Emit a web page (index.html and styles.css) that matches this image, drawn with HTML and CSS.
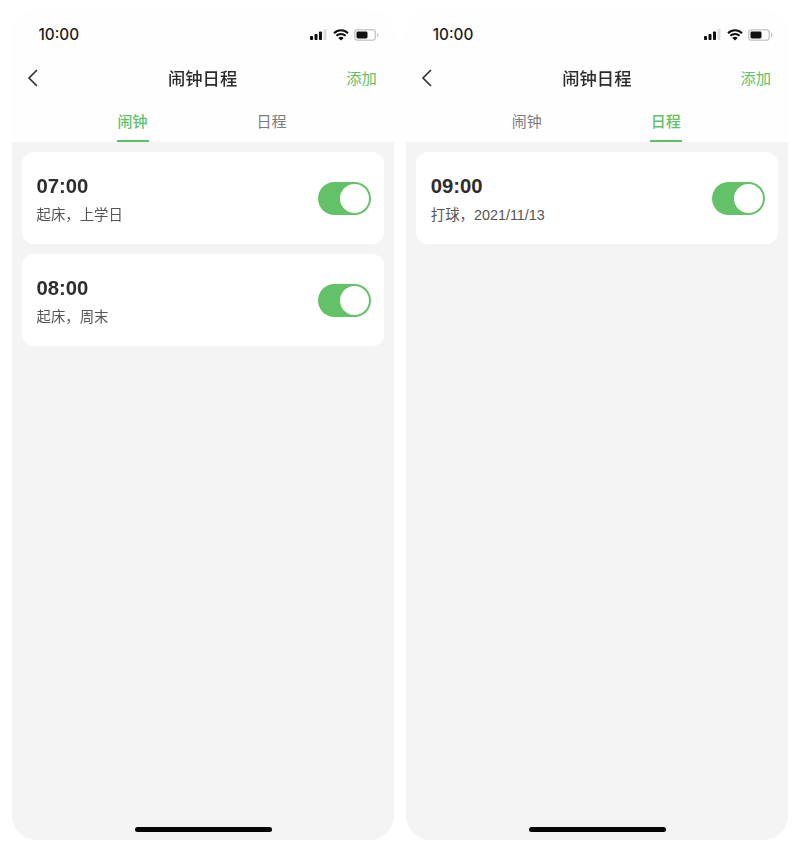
FILE: index.html
```html
<!DOCTYPE html>
<html lang="zh-CN">
<head>
<meta charset="utf-8">
<title>闹钟日程</title>
<link rel="stylesheet" href="styles.css">
</head>
<body>
<main class="screens">
  <section class="phone">
    <div class="top">
      <div class="status">
        <span class="clock">10:00</span>
        <div class="status-icons">
          <svg class="i-signal" viewBox="0 0 18 11"><rect x="0" y="7" width="3" height="4" rx=".8" fill="#111"/><rect x="4.5" y="5" width="3" height="6" rx=".8" fill="#111"/><rect x="9" y="2.5" width="3" height="8.5" rx=".8" fill="#111"/><rect x="13.5" y="0" width="3" height="11" rx=".8" fill="#ddd"/></svg>
          <svg class="i-wifi" viewBox="0 0 16 12"><path d="M1 4.2a10 10 0 0 1 14 0M3.4 6.8a6.6 6.6 0 0 1 9.2 0" fill="none" stroke="#111" stroke-width="2"/><path d="M8 11.6 5.3 9a3.800 3.800 0 0 1 5.400 0z" fill="#111"/></svg>
          <svg class="i-batt" viewBox="0 0 25 12"><rect x=".8" y=".8" width="20.500" height="10.400" rx="3" fill="#fff" stroke="#ccc" stroke-width="1.500"/><rect x="2.500" y="2.500" width="11" height="7" rx="1.400" fill="#111"/><path d="M23 4v4a2 2 0 0 0 1.400-2 2 2 0 0 0-1.400-2z" fill="#bbb"/></svg>
        </div>
      </div>
      <header class="nav">
        <svg class="i-back" viewBox="0 0 11 18"><path d="M9.500 1.500 2 9l7.500 7.500" fill="none" stroke="#333" stroke-width="1.700" stroke-linecap="round"/></svg>
        <h1 class="title">闹钟日程</h1>
        <span class="add">添加</span>
      </header>
      <nav class="tabs">
        <span class="tab on">闹钟</span>
        <span class="tab">日程</span>
      </nav>
    </div>
    <div class="body">
      <article class="card">
        <div class="info"><div class="time">07:00</div><div class="note">起床，上学日</div></div>
        <span class="switch"><span class="knob"></span></span>
      </article>
      <article class="card">
        <div class="info"><div class="time">08:00</div><div class="note">起床，周末</div></div>
        <span class="switch"><span class="knob"></span></span>
      </article>
      <div class="home"></div>
    </div>
  </section>
  <section class="phone">
    <div class="top">
      <div class="status">
        <span class="clock">10:00</span>
        <div class="status-icons">
          <svg class="i-signal" viewBox="0 0 18 11"><rect x="0" y="7" width="3" height="4" rx=".8" fill="#111"/><rect x="4.5" y="5" width="3" height="6" rx=".8" fill="#111"/><rect x="9" y="2.5" width="3" height="8.5" rx=".8" fill="#111"/><rect x="13.5" y="0" width="3" height="11" rx=".8" fill="#ddd"/></svg>
          <svg class="i-wifi" viewBox="0 0 16 12"><path d="M1 4.2a10 10 0 0 1 14 0M3.4 6.8a6.6 6.6 0 0 1 9.2 0" fill="none" stroke="#111" stroke-width="2"/><path d="M8 11.6 5.3 9a3.800 3.800 0 0 1 5.400 0z" fill="#111"/></svg>
          <svg class="i-batt" viewBox="0 0 25 12"><rect x=".8" y=".8" width="20.500" height="10.400" rx="3" fill="#fff" stroke="#ccc" stroke-width="1.500"/><rect x="2.500" y="2.500" width="11" height="7" rx="1.400" fill="#111"/><path d="M23 4v4a2 2 0 0 0 1.400-2 2 2 0 0 0-1.400-2z" fill="#bbb"/></svg>
        </div>
      </div>
      <header class="nav">
        <svg class="i-back" viewBox="0 0 11 18"><path d="M9.500 1.500 2 9l7.500 7.500" fill="none" stroke="#333" stroke-width="1.700" stroke-linecap="round"/></svg>
        <h1 class="title">闹钟日程</h1>
        <span class="add">添加</span>
      </header>
      <nav class="tabs">
        <span class="tab">闹钟</span>
        <span class="tab on">日程</span>
      </nav>
    </div>
    <div class="body">
      <article class="card">
        <div class="info"><div class="time">09:00</div><div class="note">打球，2021/11/13</div></div>
        <span class="switch"><span class="knob"></span></span>
      </article>
      <div class="home"></div>
    </div>
  </section>
</main>
</body>
</html>
```
FILE: styles.css
```css
* { box-sizing: border-box; margin: 0; padding: 0; }
html, body { height: 100%; background: #fff; }
body { font-family: "Liberation Sans", "Noto Sans CJK SC", sans-serif; overflow: hidden; }
.screens { display: flex; gap: 12px; padding: 12px 12px 12px 11.500px; height: 852px; }
.phone { width: 382.500px; height: 828px; border-radius: 24px; overflow: hidden; display: flex; flex-direction: column; background: #f4f4f4; filter: blur(.5px); }
.top { background: #fefefe; height: 130px; flex: none; }
.status { height: 44px; display: flex; align-items: center; justify-content: space-between; padding: 1px 15px 0 27px; }
.clock { font-family: "Inter", sans-serif; font-size: 15.300px; font-weight: 500; color: #1c1c1c; }
.status-icons { display: flex; align-items: center; gap: 5px; }
.i-signal { width: 18px; height: 11px; }
.i-wifi { width: 16px; height: 12px; }
.i-batt { width: 25px; height: 12px; }
.nav { height: 44px; position: relative; display: flex; align-items: center; justify-content: space-between; padding: 0 17px 0 15px; }
.i-back { width: 11px; height: 18px; }
.title { position: absolute; left: 0; right: 0; top: 1px; text-align: center; font-size: 17.300px; font-weight: 500; color: #2b2b2b; line-height: 44px; pointer-events: none; }
.add { font-size: 15.300px; color: #63c168; margin-top: -2px; }
.tabs { display: flex; justify-content: center; gap: 107px; height: 42px; padding-right: 1px; }
.tab { width: 32px; height: 42px; text-align: center; font-size: 15px; line-height: 43px; color: #7c7c7c; white-space: nowrap; }
.tab.on { color: #63c168; font-weight: 500; border-bottom: 2.500px solid #5cc064; }
.body { flex: 1; position: relative; display: flex; flex-direction: column; gap: 10px; padding: 10px 10px 0; }
.card { height: 92px; background: #fff; border-radius: 12px; display: flex; align-items: center; justify-content: space-between; padding: 0 13px 0 15px; }
.info { padding-top: 3px; }
.time { font-size: 20.300px; font-weight: 700; line-height: 24px; color: #2e2e2e; }
.note { font-size: 14.400px; line-height: 20px; margin-top: 7px; color: #555; white-space: nowrap; }
.switch { width: 53px; height: 33px; border-radius: 17px; background: #63c268; display: flex; align-items: center; justify-content: flex-end; padding-right: 2px; }
.knob { width: 29px; height: 29px; border-radius: 50%; background: #fff; }
.home { position: absolute; left: 123px; bottom: 8px; width: 137px; height: 5px; border-radius: 3px; background: #050505; }
```
